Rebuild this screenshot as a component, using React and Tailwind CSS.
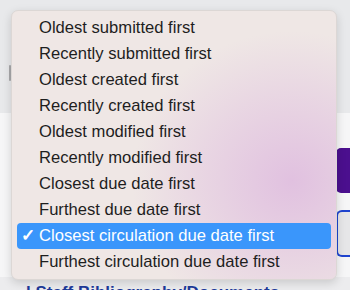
const options = [
  'Oldest submitted first',
  'Recently submitted first',
  'Oldest created first',
  'Recently created first',
  'Oldest modified first',
  'Recently modified first',
  'Closest due date first',
  'Furthest due date first',
  'Closest circulation due date first',
  'Furthest circulation due date first',
]

const selected = 'Closest circulation due date first'

export default function App() {
  return (
    <div className="relative h-[290px] w-[350px] overflow-hidden bg-[#f6f6f7] font-['Liberation_Sans',Arial,sans-serif]">
      {/* page behind the menu */}
      <div className="flex h-[113px] items-center bg-[#e8e9eb] pl-[9px]">
        <div className="mt-[32px] h-[16px] w-[2px] rounded bg-[#a9a9ab]" />
      </div>
      <div className="flex flex-col items-end pt-[35px]">
        <div className="h-[45px] w-[14px] rounded-tl-[5px] rounded-bl-[5px] bg-[#4b0f8e]" />
        <div className="mt-[17px] h-[47px] w-[14px] rounded-l-[6px] border-y-2 border-l-2 border-[#1f44cf] bg-[#e6e6e8]" />
      </div>
      <div className="mt-[20px] flex h-[30px] bg-[#ececee] pl-[26px] pt-[3px]">
        <span className="text-[17px] font-bold text-[#1d3a9a]">l Staff Bibliography/Documents</span>
      </div>

      {/* sort menu */}
      <div className="absolute left-[11px] top-[10px] w-[326px] overflow-hidden rounded-[7px] border border-[#dcd7d5] bg-[#efe7e5] px-[5px] py-[4px] shadow-[0_3px_10px_rgba(0,0,0,0.15)]">
        <div className="pointer-events-none absolute left-[120px] top-[20px] h-[300px] w-[320px] rounded-full bg-[radial-gradient(closest-side,rgba(220,180,222,0.75),rgba(220,180,222,0.35)_55%,rgba(220,180,222,0))]" />
        <ul className="relative">
          {options.map((o) => {
            const active = o === selected
            return (
              <li
                key={o}
                className={
                  active
                    ? 'flex h-[26px] items-center rounded-[4px] bg-[#3a96fb] text-[16.6px] text-white'
                    : 'flex h-[26px] items-center text-[16.6px] text-[#1e1e1e]'
                }
              >
                <span className="w-[22px] pl-[4px] text-[17px] font-bold">{active ? '✓' : ''}</span>
                <span>{o}</span>
              </li>
            )
          })}
        </ul>
      </div>
    </div>
  )
}
